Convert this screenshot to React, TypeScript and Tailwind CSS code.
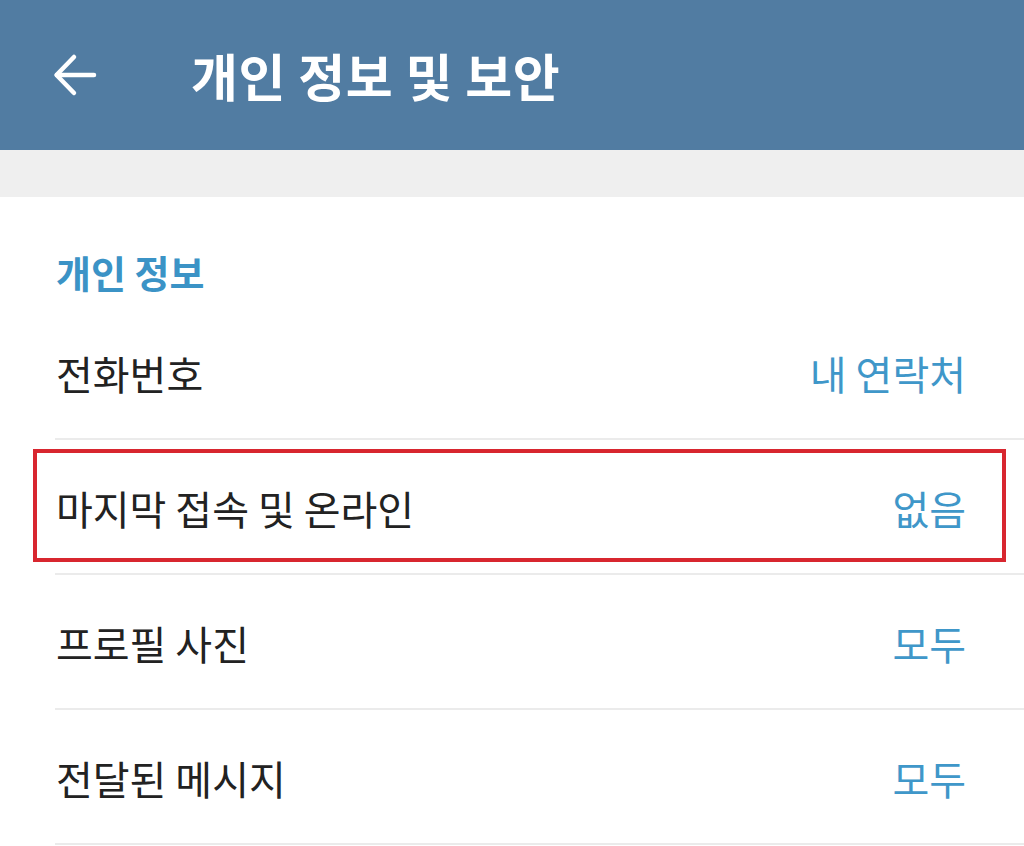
import React from 'react';

const rows = [
  { label: '전화번호', value: '내 연락처' },
  { label: '마지막 접속 및 온라인', value: '없음', marked: true },
  { label: '프로필 사진', value: '모두' },
  { label: '전달된 메시지', value: '모두' },
];

function BackArrow() {
  return (
    <svg width="44" height="44" viewBox="0 0 44 44" fill="none" stroke="white" strokeWidth="4.5" strokeLinecap="round" strokeLinejoin="round">
      <path d="M41 22H4" />
      <path d="M21 4L3.5 22L21 40" />
    </svg>
  );
}

export default function App() {
  return (
    <div
      className="w-[1024px] h-[846px] overflow-hidden bg-white"
      style={{ fontFamily: '"Noto Sans CJK KR", "Noto Sans", sans-serif' }}
    >
      <header className="h-[150px] bg-[#517ca2] flex items-center pl-[53px]">
        <BackArrow />
        <h1 className="ml-[94px] text-[51px] font-bold text-white leading-none tracking-[0.6px]">개인 정보 및 보안</h1>
      </header>

      <div className="h-[47px] bg-[#efefef]" />

      <section>
        <div className="pl-[56px] pt-[56px] pb-[14px]">
          <h2 className="text-[38px] font-bold text-[#3b93c6] leading-[38px]">개인 정보</h2>
        </div>

        {rows.map((row) => (
          <div key={row.label} className="relative">
            <div className="h-[133px] flex items-center justify-between pl-[56px] pr-[58px] pt-[2px]">
              <span className="text-[40px] text-[#222222] leading-none">{row.label}</span>
              <span className="text-[40px] text-[#3f97c9] leading-none">{row.value}</span>
            </div>
            <div className="ml-[55px] h-[2px] bg-[#ebebeb]" />
            {row.marked && (
              <div className="absolute left-[33px] right-[18px] top-[9px] bottom-[13px] border-[4px] border-[#d8262f] pointer-events-none" />
            )}
          </div>
        ))}
      </section>
    </div>
  );
}
